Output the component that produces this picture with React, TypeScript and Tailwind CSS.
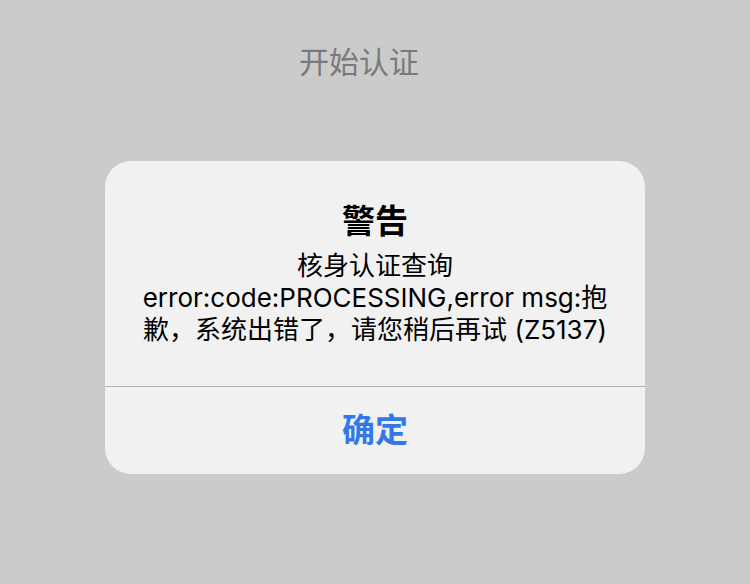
export default function App() {
  const font = { fontFamily: 'Inter, "Noto Sans CJK SC", sans-serif' };

  return (
    <div className="relative h-[584px] w-[750px] overflow-hidden bg-[#cbcbcb]" style={font}>
      <div className="pt-[42px] pr-[32px] text-center text-[30px] leading-[40px] text-[#7a7a7a]">开始认证</div>

      <div className="absolute inset-0 flex justify-center pt-[161px]">
        <div className="flex h-[313px] w-[540px] flex-col overflow-hidden rounded-[26px] bg-[#f1f1f1]">
          <div className="flex h-[225px] flex-col items-center pt-[40px]">
            <div className="text-[33px] font-bold leading-[40px] text-black">警告</div>
            <div className="mt-[9px] text-center text-[26px] leading-[32px] text-black">
              <div className="whitespace-nowrap">核身认证查询</div>
              <div className="whitespace-nowrap">error:code:PROCESSING,error msg:抱</div>
              <div className="whitespace-nowrap">歉，系统出错了，请您稍后再试 (Z5137)</div>
            </div>
          </div>
          <div className="h-px bg-[#b4b4b4]" />
          <button className="flex flex-1 items-center justify-center text-[33px] font-bold text-[#3478e8]">
            确定
          </button>
        </div>
      </div>
    </div>
  );
}
